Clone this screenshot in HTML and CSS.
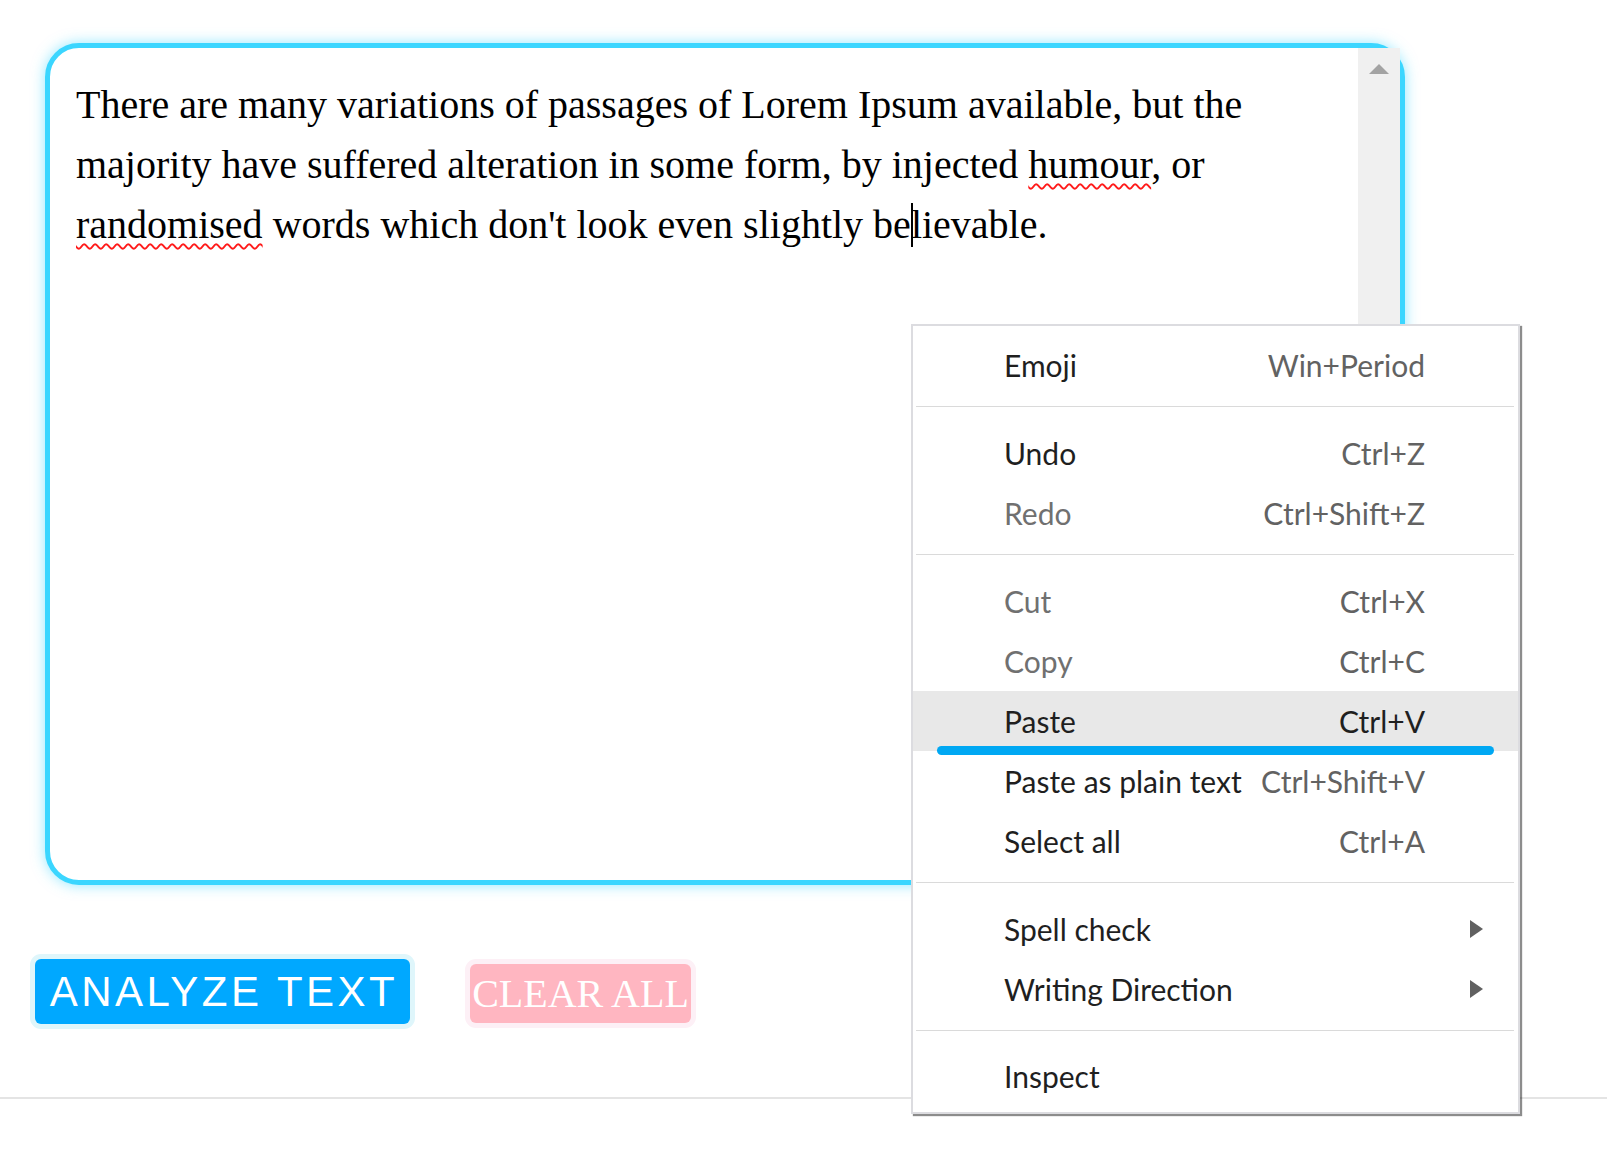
FILE: index.html
```html
<!DOCTYPE html>
<html lang="en">
<head>
<meta charset="utf-8">
<title>Text analyzer</title>
<link rel="stylesheet" href="styles.css">
</head>
<body>
<main class="page">
  <div class="editor">
    <div class="editor-text">There are many variations of passages of Lorem Ipsum available, but the majority have suffered alteration in some form, by injected <span class="misspelt">humour</span>, or <span class="misspelt">randomised</span> words which don't look even slightly be<span class="caret"></span>lievable.</div>
    <div class="scrollbar"><span class="scroll-up"></span></div>
  </div>
  <div class="actions">
    <button class="btn btn-analyze">ANALYZE TEXT</button>
    <button class="btn btn-clear">CLEAR ALL</button>
  </div>
</main>
<hr class="rule">

<div class="context-menu">
  <div class="item"><span class="label">Emoji</span><span class="key">Win+Period</span></div>
  <div class="sep"></div>
  <div class="item"><span class="label">Undo</span><span class="key">Ctrl+Z</span></div>
  <div class="item disabled"><span class="label">Redo</span><span class="key">Ctrl+Shift+Z</span></div>
  <div class="sep"></div>
  <div class="item disabled"><span class="label">Cut</span><span class="key">Ctrl+X</span></div>
  <div class="item disabled"><span class="label">Copy</span><span class="key">Ctrl+C</span></div>
  <div class="item active"><span class="label">Paste</span><span class="key">Ctrl+V</span></div>
  <div class="item"><span class="label">Paste as plain text</span><span class="key">Ctrl+Shift+V</span></div>
  <div class="item"><span class="label">Select all</span><span class="key">Ctrl+A</span></div>
  <div class="sep"></div>
  <div class="item"><span class="label">Spell check</span><span class="key"></span><span class="submenu"></span></div>
  <div class="item"><span class="label">Writing Direction</span><span class="key"></span><span class="submenu"></span></div>
  <div class="sep sep-last"></div>
  <div class="item"><span class="label">Inspect</span><span class="key"></span></div>
</div>
<div class="annotation"></div>
</body>
</html>
```

FILE: styles.css
```css
html, body {
  margin: 0;
  padding: 0;
  background: #ffffff;
}

.page {
  padding: 43px 0 0 35px;
}

.editor {
  box-sizing: border-box;
  width: 1360px;
  height: 842px;
  margin-left: 10px;
  display: flex;
  border: 5px solid #3bd6ff;
  border-radius: 34px;
  box-shadow: 0 0 14px rgba(59, 214, 255, 0.55);
  background: #fff;
}

.editor-text {
  flex: 1;
  padding: 27px 27px 0 26px;
  font-family: "Liberation Serif", "Times New Roman", serif;
  font-size: 40px;
  line-height: 60px;
  color: #000;
}

.misspelt {
  text-decoration: underline wavy #ff1a1a;
  text-decoration-thickness: 1.5px;
  text-underline-offset: 5px;
}

.caret {
  display: inline-block;
  width: 2px;
  height: 44px;
  margin-right: -2px;
  vertical-align: -9px;
  background: #000;
}

.scrollbar {
  width: 42px;
  background: #f0f0f0;
  display: flex;
  justify-content: center;
}

.scroll-up {
  margin-top: 16px;
  width: 0;
  height: 0;
  border-left: 10px solid transparent;
  border-right: 10px solid transparent;
  border-bottom: 10px solid #a3a3a3;
}

.actions {
  display: flex;
  align-items: flex-start;
  gap: 60px;
  margin-top: 74px;
}

.btn {
  box-sizing: border-box;
  border: none;
  padding: 0;
  margin: 0;
  color: #ffffff;
  border-radius: 6px;
  white-space: nowrap;
  display: flex;
  align-items: center;
  justify-content: center;
}

.btn-analyze {
  width: 375px;
  height: 65px;
  padding-left: 3px;
  background: #00a8ff;
  box-shadow: 0 0 0 5px #dff6fb;
  font-family: "Liberation Sans", Arial, sans-serif;
  font-size: 42px;
  letter-spacing: 3.5px;
}

.btn-clear {
  width: 221px;
  height: 59px;
  margin-top: 5px;
  background: #ffb6c1;
  box-shadow: 0 0 0 5px #fdf0f6;
  font-family: "Liberation Serif", "Times New Roman", serif;
  font-size: 40px;
}

.rule {
  margin: 73px 0 0 0;
  border: none;
  height: 2px;
  background: #e4e4e4;
}

.context-menu {
  position: absolute;
  left: 911px;
  top: 324px;
  width: 609px;
  box-sizing: border-box;
  padding: 9px 0 6px 0;
  background: #fff;
  border: 2px solid #dcdce0;
  box-shadow: 2px 2px 1px rgba(0, 0, 0, 0.45);
  font-family: Lato, "Open Sans", sans-serif;
  font-size: 30px;
  color: #1f1f1f;
}

.item {
  display: grid;
  grid-template-columns: 1fr auto 93px;
  align-items: center;
  height: 60px;
  padding-left: 91px;
}

.item .key {
  color: #626262;
}

.item.disabled .label {
  color: #707070;
}

.item.active {
  background: #e8e8e8;
}

.item.active .key {
  color: #1f1f1f;
}

.submenu {
  margin-left: 45px;
  width: 0;
  height: 0;
  border-left: 13px solid #606060;
  border-top: 9px solid transparent;
  border-bottom: 9px solid transparent;
}

.sep {
  height: 1px;
  background: #dadada;
  margin: 11px 4px 16px 3px;
}

.sep-last {
  margin-bottom: 15px;
}

.annotation {
  position: absolute;
  left: 937px;
  top: 746px;
  width: 557px;
  height: 9px;
  border-radius: 5px;
  background: #00a8f3;
}
```
